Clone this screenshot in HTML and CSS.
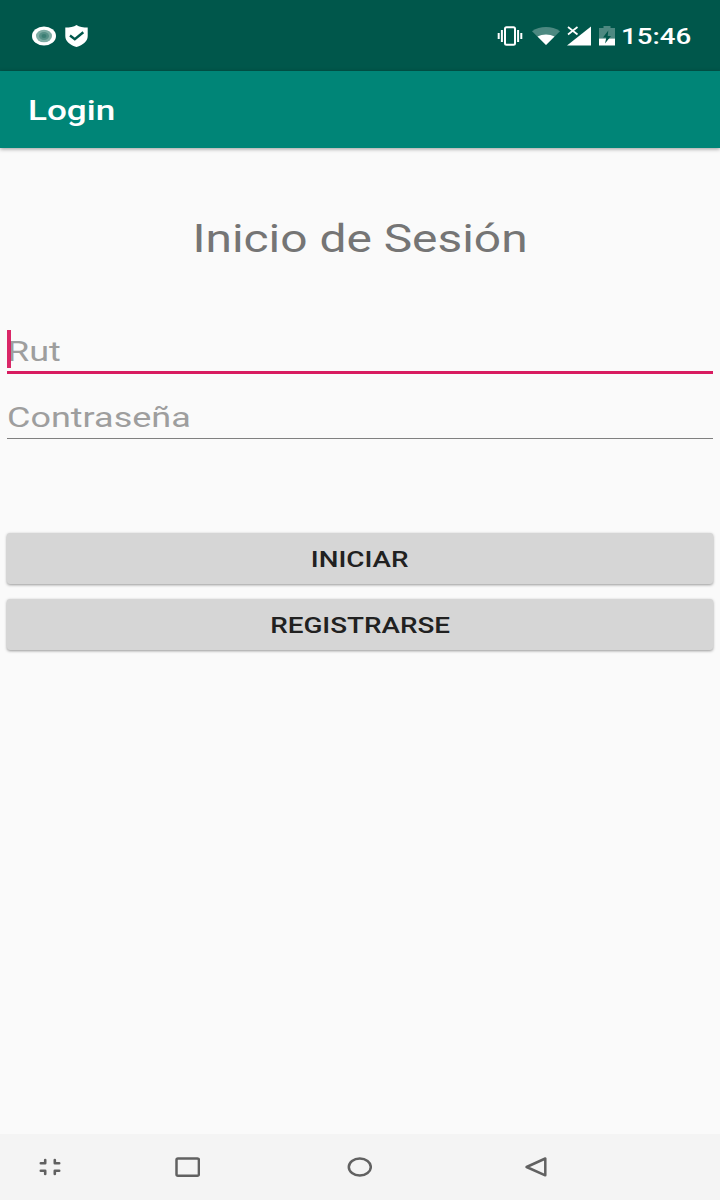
FILE: index.html
```html
<!DOCTYPE html>
<html lang="es">
<head>
    <meta charset="UTF-8">
    <meta name="viewport" content="width=device-width, initial-scale=1.0">
    <title>Login</title>
    <link rel="stylesheet" href="styles.css">
</head>
<body>

    <div class="status-bar">
        <div class="notifications">
            <svg width="24" height="20" viewBox="0 0 24 20">
                <ellipse cx="12" cy="10" rx="12" ry="9.5" fill="#fff"/>
                <ellipse cx="12" cy="10" rx="8" ry="6.3" fill="#7fada5"/>
                <ellipse cx="12" cy="10" rx="5" ry="4" fill="#559087"/>
                <ellipse cx="12" cy="10" rx="2.5" ry="2" fill="#3b7e74"/>
            </svg>
            <svg width="23" height="22" viewBox="0 0 23 22">
                <path d="M11.5 0 C9 1.8 4.5 2.6 0.3 2.6 V11 C0.3 16.5 5 20 11.5 22 C18 20 22.7 16.5 22.7 11 V2.6 C18.5 2.6 14 1.8 11.5 0Z" fill="#fff"/>
                <path d="M5 10.5 L9.8 14.2 L18.3 7.2" fill="none" stroke="#00574b" stroke-width="2.4"/>
            </svg>
        </div>
        <div class="system">
            <svg class="vibrate" width="26" height="20" viewBox="0 0 26 20">
                <rect x="8" y="1.2" width="10" height="17.6" rx="1.5" fill="none" stroke="#fff" stroke-width="2"/>
                <path d="M4.9 4V16M1.7 7V13M21.1 4V16M24.3 7V13" stroke="#fff" stroke-width="2"/>
            </svg>
            <svg class="wifi" width="28" height="18" viewBox="0 0 28 18">
                <path d="M0 4.2 C8 -1.4 20 -1.4 28 4.2 L14 18Z" fill="#fff" opacity="0.3"/>
                <path d="M5.5 9.6 C10.5 6.8 17.5 6.8 22.5 9.6 L14 18Z" fill="#fff"/>
            </svg>
            <svg class="signal" width="24" height="20" viewBox="0 0 24 20">
                <path d="M24 0.5 V19.5 H0Z" fill="#fff"/>
                <path d="M0 0H11.5V9H0Z" fill="#00574b"/>
                <path d="M1 1 L10.5 8.5 M10.5 1 L1 8.5" stroke="#fff" stroke-width="1.7"/>
            </svg>
            <svg class="battery" width="16" height="20" viewBox="0 0 16 20">
                <path d="M0 2H4.5V0H11.5V2H16V12.5H0Z" fill="#4d8981"/>
                <path d="M0 12.5H16V19.5H0Z" fill="#fff"/>
                <path d="M9.3 4.5 L4 11.5 H7.3 L6 17.5 L12 10 H8.7Z" fill="#00574b"/>
            </svg>
            <span class="clock">15:46</span>
        </div>
    </div>

    <div class="toolbar">
        <span class="toolbar-title">Login</span>
    </div>

    <div class="content">
        <h1 class="title">Inicio de Sesión</h1>

        <div class="field active">
            <input type="text" class="input" placeholder="Rut">
            <span class="cursor"></span>
        </div>
        <div class="field">
            <input type="password" class="input" placeholder="Contraseña">
        </div>

        <div class="buttons">
            <button class="button"><span class="button-text">INICIAR</span></button>
            <button class="button"><span class="button-text">REGISTRARSE</span></button>
        </div>
    </div>

    <div class="nav-bar">
        <svg class="nav-shrink" width="22" height="18" viewBox="0 0 22 18">
            <path d="M1.8 5.2H6.2V2M15.8 2V5.200H20.200M1.800 12.800H6.200V16M15.800 16V12.800H20.200" fill="none" stroke="#616161" stroke-width="2.6" stroke-linecap="round" stroke-linejoin="round"/>
        </svg>
        <svg class="nav-recent" width="25" height="20" viewBox="0 0 25 20">
            <rect x="1.5" y="1.5" width="22.4" height="17.2" rx="1.5" fill="none" stroke="#616161" stroke-width="2.5"/>
        </svg>
        <svg class="nav-home" width="25" height="20" viewBox="0 0 25 20">
            <ellipse cx="12.8" cy="10" rx="11" ry="8.6" fill="none" stroke="#616161" stroke-width="2.5"/>
        </svg>
        <svg class="nav-back" width="22" height="20" viewBox="0 0 22 20">
            <path d="M20.3 1.5V18.3L1.6 10Z" fill="none" stroke="#616161" stroke-width="2.5" stroke-linejoin="round"/>
        </svg>
    </div>

</body>
</html>
```
FILE: styles.css
```css
* {
    margin: 0;
    padding: 0;
    box-sizing: border-box;
}
body {
    font-family: Roboto, sans-serif;
    display: flex;
    flex-direction: column;
    height: 100vh;
    background-color: #fafafa;
}
svg {
    display: block;
    flex-shrink: 0;
}
.status-bar {
    display: flex;
    justify-content: space-between;
    align-items: center;
    height: 71px;
    padding: 0 28px 0 32px;
    background-color: #00574b;
}
.notifications {
    display: flex;
    align-items: center;
    gap: 9px;
}
.system {
    display: flex;
    align-items: center;
}
.wifi {
    margin-left: 9px;
}
.signal {
    margin-left: 7px;
}
.battery {
    margin-left: 8px;
}
.clock {
    width: 57px;
    margin-left: 6px;
    margin-right: 14px;
    color: #fff;
    font-size: 22.5px;
    font-weight: 500;
    line-height: 30px;
    transform: scaleX(1.23);
    transform-origin: left;
}
.toolbar {
    display: flex;
    align-items: center;
    height: 77px;
    padding-left: 28px;
    background-color: #008577;
    box-shadow: 0 1px 4px rgba(0, 0, 0, 0.4);
}
.toolbar-title {
    padding-top: 2px;
    color: #fff;
    font-size: 27px;
    font-weight: 500;
    transform: scaleX(1.3);
    transform-origin: left;
}
.content {
    flex: 1;
    padding: 66px 7px 0;
}
.title {
    width: fit-content;
    height: 50px;
    margin: 0 auto 66px;
    color: #757575;
    font-size: 38px;
    font-weight: 400;
    line-height: 50px;
    transform: scaleX(1.26);
}
.field {
    position: relative;
    height: 43px;
    margin-bottom: 22px;
    border-bottom: 1px solid #808080;
}
.field.active {
    height: 44px;
    border-bottom: 3px solid #d81b60;
}
.input {
    display: block;
    width: 77%;
    height: 41px;
    padding-top: 1px;
    border: none;
    outline: none;
    background: none;
    font-family: inherit;
    font-size: 28px;
    transform: scaleX(1.285);
    transform-origin: left;
}
.input::placeholder {
    color: #9e9e9e;
}
.cursor {
    position: absolute;
    left: 0;
    top: 0;
    width: 4px;
    height: 38px;
    background-color: #d81b60;
    opacity: 0.95;
}
.buttons {
    display: flex;
    flex-direction: column;
    gap: 15px;
    margin-top: 94px;
}
.button {
    height: 51px;
    padding-top: 2px;
    border: none;
    border-radius: 3px;
    background-color: #d6d6d6;
    box-shadow: 0 1px 3px rgba(0, 0, 0, 0.4);
}
.button-text {
    display: inline-block;
    color: #212121;
    font-family: Roboto, sans-serif;
    font-size: 22px;
    font-weight: 500;
    transform: scaleX(1.265);
}
.nav-bar {
    display: flex;
    align-items: center;
    height: 66px;
    padding-left: 39px;
    background-color: #f4f4f4;
}
.nav-recent {
    margin-left: 114px;
}
.nav-home {
    margin-left: 147px;
}
.nav-back {
    margin-left: 153px;
}
```
